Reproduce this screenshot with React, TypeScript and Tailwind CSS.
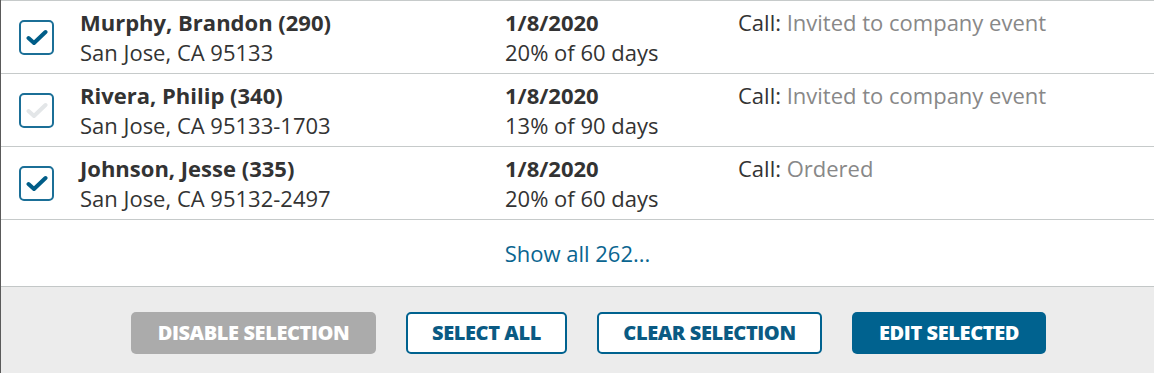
import React from "react";

type Row = {
  name: string;
  address: string;
  date: string;
  progress: string;
  call: string;
  checked: boolean;
};

const ROWS: Row[] = [
  {
    name: "Murphy, Brandon (290)",
    address: "San Jose, CA 95133",
    date: "1/8/2020",
    progress: "20% of 60 days",
    call: "Invited to company event",
    checked: true,
  },
  {
    name: "Rivera, Philip (340)",
    address: "San Jose, CA 95133-1703",
    date: "1/8/2020",
    progress: "13% of 90 days",
    call: "Invited to company event",
    checked: false,
  },
  {
    name: "Johnson, Jesse (335)",
    address: "San Jose, CA 95132-2497",
    date: "1/8/2020",
    progress: "20% of 60 days",
    call: "Ordered",
    checked: true,
  },
];

function CheckBox({ checked }: { checked: boolean }) {
  return (
    <div className="w-[35px] h-[35px] rounded-[5px] border-2 border-[#1b6f97] bg-white flex items-center justify-center">
      <svg width="22" height="17" viewBox="0 0 22 17" fill="none">
        <path
          d="M2.5 9 L8 14 L19.5 3"
          stroke={checked ? "#005d88" : "#e3e6e8"}
          strokeWidth="4"
          strokeLinecap="round"
          strokeLinejoin="round"
        />
      </svg>
    </div>
  );
}

const btn =
  "h-[42px] rounded-[5px] text-[20px] font-extrabold uppercase tracking-[-0.4px] leading-none";

export default function App() {
  return (
    <div
      className="w-[1154px] h-[373px] bg-white border-l border-[#5a5a5a] flex flex-col"
      style={{ fontFamily: '"Open Sans", "Liberation Sans", sans-serif' }}
    >
      <div className="border-t border-[#c6caca]">
        {ROWS.map((row) => (
          <div
            key={row.name}
            className="h-[73px] border-b border-[#c6caca] flex items-start text-[22px] leading-[30px] text-[#333]"
          >
            <div className="pl-[18px] pt-[19px] w-[79px] shrink-0">
              <CheckBox checked={row.checked} />
            </div>
            <div className="w-[425px] shrink-0 pt-[6px]">
              <div className="font-bold">{row.name}</div>
              <div>{row.address}</div>
            </div>
            <div className="w-[233px] shrink-0 pt-[6px]">
              <div className="font-bold">{row.date}</div>
              <div>{row.progress}</div>
            </div>
            <div className="pt-[6px]">
              Call: <span className="text-[#888]">{row.call}</span>
            </div>
          </div>
        ))}
      </div>
      <div className="h-[66px] flex items-center justify-center">
        <a className="text-[22px] text-[#0a6590] leading-[30px]">
          Show all 262...
        </a>
      </div>
      <div className="flex-1 bg-[#ececec] border-t border-[#c3c7c7] flex items-start pl-[130px] pt-[25px] gap-[30px]">
        <button className={`${btn} w-[245px] bg-[#ababab] text-white`}>
          Disable Selection
        </button>
        <button
          className={`${btn} w-[161px] border-2 border-[#00628f] bg-white text-[#0a5a83]`}
        >
          Select All
        </button>
        <button
          className={`${btn} w-[225px] border-2 border-[#00628f] bg-white text-[#0a5a83]`}
        >
          Clear Selection
        </button>
        <button className={`${btn} w-[194px] bg-[#00628f] text-white`}>
          Edit Selected
        </button>
      </div>
    </div>
  );
}
